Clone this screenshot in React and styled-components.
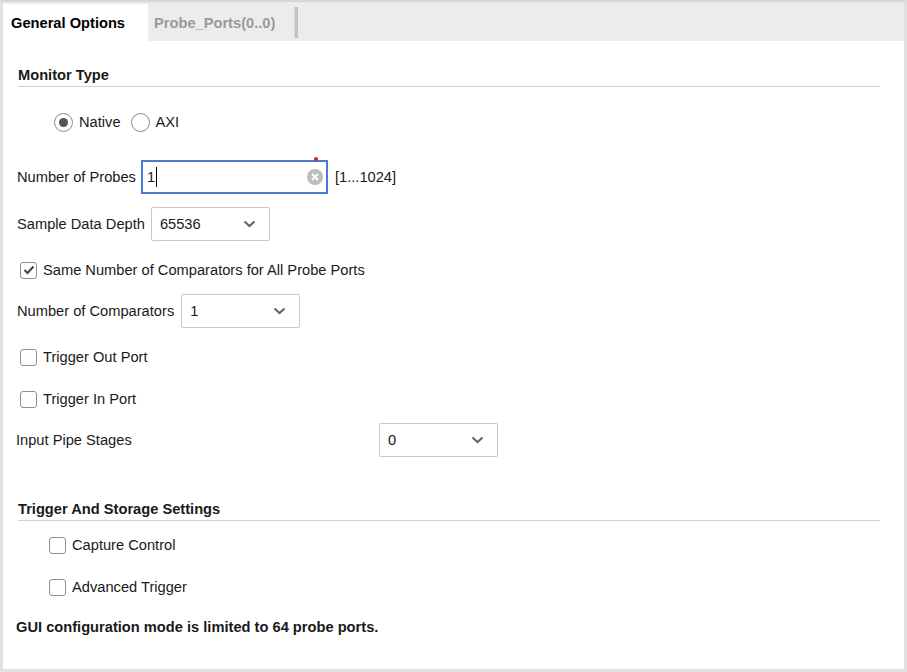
import React from "react";
import styled, { createGlobalStyle } from "styled-components";

const GlobalStyle = createGlobalStyle`
    html, body {
        margin: 0;
        padding: 0;
        background: #ffffff;
    }
    body {
        font-family: "Liberation Sans", Arial, sans-serif;
        font-size: 14.67px;
        color: #1a1a1a;
    }
`;

const Frame = styled.div`
    box-sizing: border-box;
    width: 907px;
    height: 672px;
    border-top: 2px solid #d6d6d6;
    border-left: 3px solid #e0e0e0;
    border-right: 3px solid #e0e0e0;
    border-bottom: 3px solid #e0e0e0;
    display: flex;
    flex-direction: column;
    background: #fff;
`;

const TabBar = styled.div`
    display: flex;
    align-items: flex-end;
    height: 39px;
    padding-top: 2px;
    box-sizing: border-box;
    background: #ececec;
`;

const Tab = styled.div`
    height: 37px;
    display: flex;
    align-items: center;
    box-sizing: border-box;
    padding-left: ${(p) => (p.$active ? "8px" : "6px")};
    width: ${(p) => p.$width}px;
    font-weight: bold;
    color: ${(p) => (p.$active ? "#000" : "#9a9a9a")};
    background: ${(p) => (p.$active ? "#fff" : "transparent")};
`;

const TabDivider = styled.div`
    align-self: flex-start;
    margin-top: 3px;
    width: 4px;
    height: 31px;
    background: #c2c2c2;
    border-left: 1px solid #d8d8d8;
    box-sizing: border-box;
`;

const Content = styled.div`
    flex: 1;
    display: flex;
    flex-direction: column;
    padding: 22px 24px 0 14px;
`;

const SectionHeading = styled.div`
    margin-top: ${(p) => p.$mt || 0}px;
    margin-left: 1px;
    height: 23px;
    display: flex;
    align-items: center;
    font-weight: bold;
    border-bottom: 1px solid #d0d0d0;
`;

const Row = styled.div`
    display: flex;
    align-items: center;
    height: ${(p) => p.$h || 24}px;
    margin-top: ${(p) => p.$mt || 0}px;
    padding-left: ${(p) => p.$indent || 0}px;
`;

const Label = styled.span`
    white-space: nowrap;
    flex-shrink: 0;
    margin-right: ${(p) => p.$gap ?? 5}px;
    width: ${(p) => (p.$width ? `${p.$width}px` : "auto")};
    margin-left: ${(p) => p.$shift || 0}px;
`;

const RadioCircle = styled.span`
    box-sizing: border-box;
    width: 19px;
    height: 19px;
    border-radius: 50%;
    border: 1px solid #8a8a8a;
    background: #fff;
    display: inline-flex;
    align-items: center;
    justify-content: center;
    margin-right: 6px;
    &::after {
        content: "";
        width: 9px;
        height: 9px;
        border-radius: 50%;
        background: ${(p) => (p.$checked ? "#555" : "transparent")};
    }
`;

const RadioText = styled.span`
    margin-right: 10px;
`;

const Box = styled.span`
    box-sizing: border-box;
    width: 17px;
    height: 17px;
    border: 1px solid #8f8f8f;
    border-radius: 3px;
    background: #fff;
    display: inline-flex;
    align-items: center;
    justify-content: center;
    margin-left: 3px;
    margin-right: 6px;
`;

const TextBox = styled.div`
    position: relative;
    box-sizing: border-box;
    width: 187px;
    height: 34px;
    border: 2px solid #4a7bd0;
    display: flex;
    align-items: center;
    padding-left: 4px;
`;

const Caret = styled.span`
    display: inline-block;
    width: 1px;
    height: 20px;
    background: #000;
    margin-left: 1px;
`;

const ClearIcon = styled.span`
    position: absolute;
    right: 3px;
    top: 7px;
    width: 16px;
    height: 16px;
    display: flex;
`;

const RedDot = styled.span`
    position: absolute;
    right: 8px;
    top: -5px;
    width: 4px;
    height: 4px;
    border-radius: 50%;
    background: #e02020;
`;

const Range = styled.span`
    margin-left: 7px;
`;

const Select = styled.div`
    box-sizing: border-box;
    width: 119px;
    height: 34px;
    border: 1px solid #c8c8c8;
    border-radius: 2px;
    display: flex;
    align-items: center;
    justify-content: space-between;
    padding: 0 13px 0 8px;
    background: #fff;
`;

const Note = styled.div`
    margin-top: 18px;
    height: 20px;
    display: flex;
    align-items: center;
    font-weight: bold;
    margin-left: -1px;
`;

const Chevron = () => (
    <svg width="13" height="8" viewBox="0 0 13 8">
        <path d="M1.5 1.5 L6.5 6 L11.5 1.5" fill="none" stroke="#666" strokeWidth="2.2" />
    </svg>
);

const Radio = ({ checked, children }) => (
    <>
        <RadioCircle $checked={checked} />
        <RadioText>{children}</RadioText>
    </>
);

const Checkbox = ({ checked }) => (
    <Box>
        {checked && (
            <svg width="12" height="10" viewBox="0 0 12 10">
                <path d="M1.5 5 L4.5 8 L10.5 1.5" fill="none" stroke="#444" strokeWidth="2" />
            </svg>
        )}
    </Box>
);

const Dropdown = ({ value }) => (
    <Select>
        <span>{value}</span>
        <Chevron />
    </Select>
);

const App = () => (
    <>
        <GlobalStyle />
        <Frame>
            <TabBar>
                <Tab $active $width={145}>General Options</Tab>
                <Tab $width={146}>Probe_Ports(0..0)</Tab>
                <TabDivider />
            </TabBar>
            <Content>
                <SectionHeading>Monitor Type</SectionHeading>
                <Row $mt={23} $indent={37}>
                    <Radio checked>Native</Radio>
                    <Radio>AXI</Radio>
                </Row>
                <Row $mt={26} $h={34}>
                    <Label>Number of Probes</Label>
                    <TextBox>
                        1<Caret />
                        <RedDot />
                        <ClearIcon>
                            <svg width="16" height="16" viewBox="0 0 16 16">
                                <circle cx="8" cy="8" r="8" fill="#bdbdbd" />
                                <path d="M5 5 L11 11 M11 5 L5 11" stroke="#fff" strokeWidth="2" />
                            </svg>
                        </ClearIcon>
                    </TextBox>
                    <Range>[1...1024]</Range>
                </Row>
                <Row $mt={13} $h={34}>
                    <Label $gap={6}>Sample Data Depth</Label>
                    <Dropdown value="65536" />
                </Row>
                <Row $mt={17}>
                    <Checkbox checked />
                    <span>Same Number of Comparators for All Probe Ports</span>
                </Row>
                <Row $mt={12} $h={34}>
                    <Label $gap={7}>Number of Comparators</Label>
                    <Dropdown value="1" />
                </Row>
                <Row $mt={17}>
                    <Checkbox />
                    <span>Trigger Out Port</span>
                </Row>
                <Row $mt={18}>
                    <Checkbox />
                    <span>Trigger In Port</span>
                </Row>
                <Row $mt={12} $h={34}>
                    <Label $shift={-1} $width={363} $gap={0}>Input Pipe Stages</Label>
                    <Dropdown value="0" />
                </Row>
                <SectionHeading $mt={40}>Trigger And Storage Settings</SectionHeading>
                <Row $mt={12} $indent={29}>
                    <Checkbox />
                    <span>Capture Control</span>
                </Row>
                <Row $mt={18} $indent={29}>
                    <Checkbox />
                    <span>Advanced Trigger</span>
                </Row>
                <Note>GUI configuration mode is limited to 64 probe ports.</Note>
            </Content>
        </Frame>
    </>
);

export default App;
